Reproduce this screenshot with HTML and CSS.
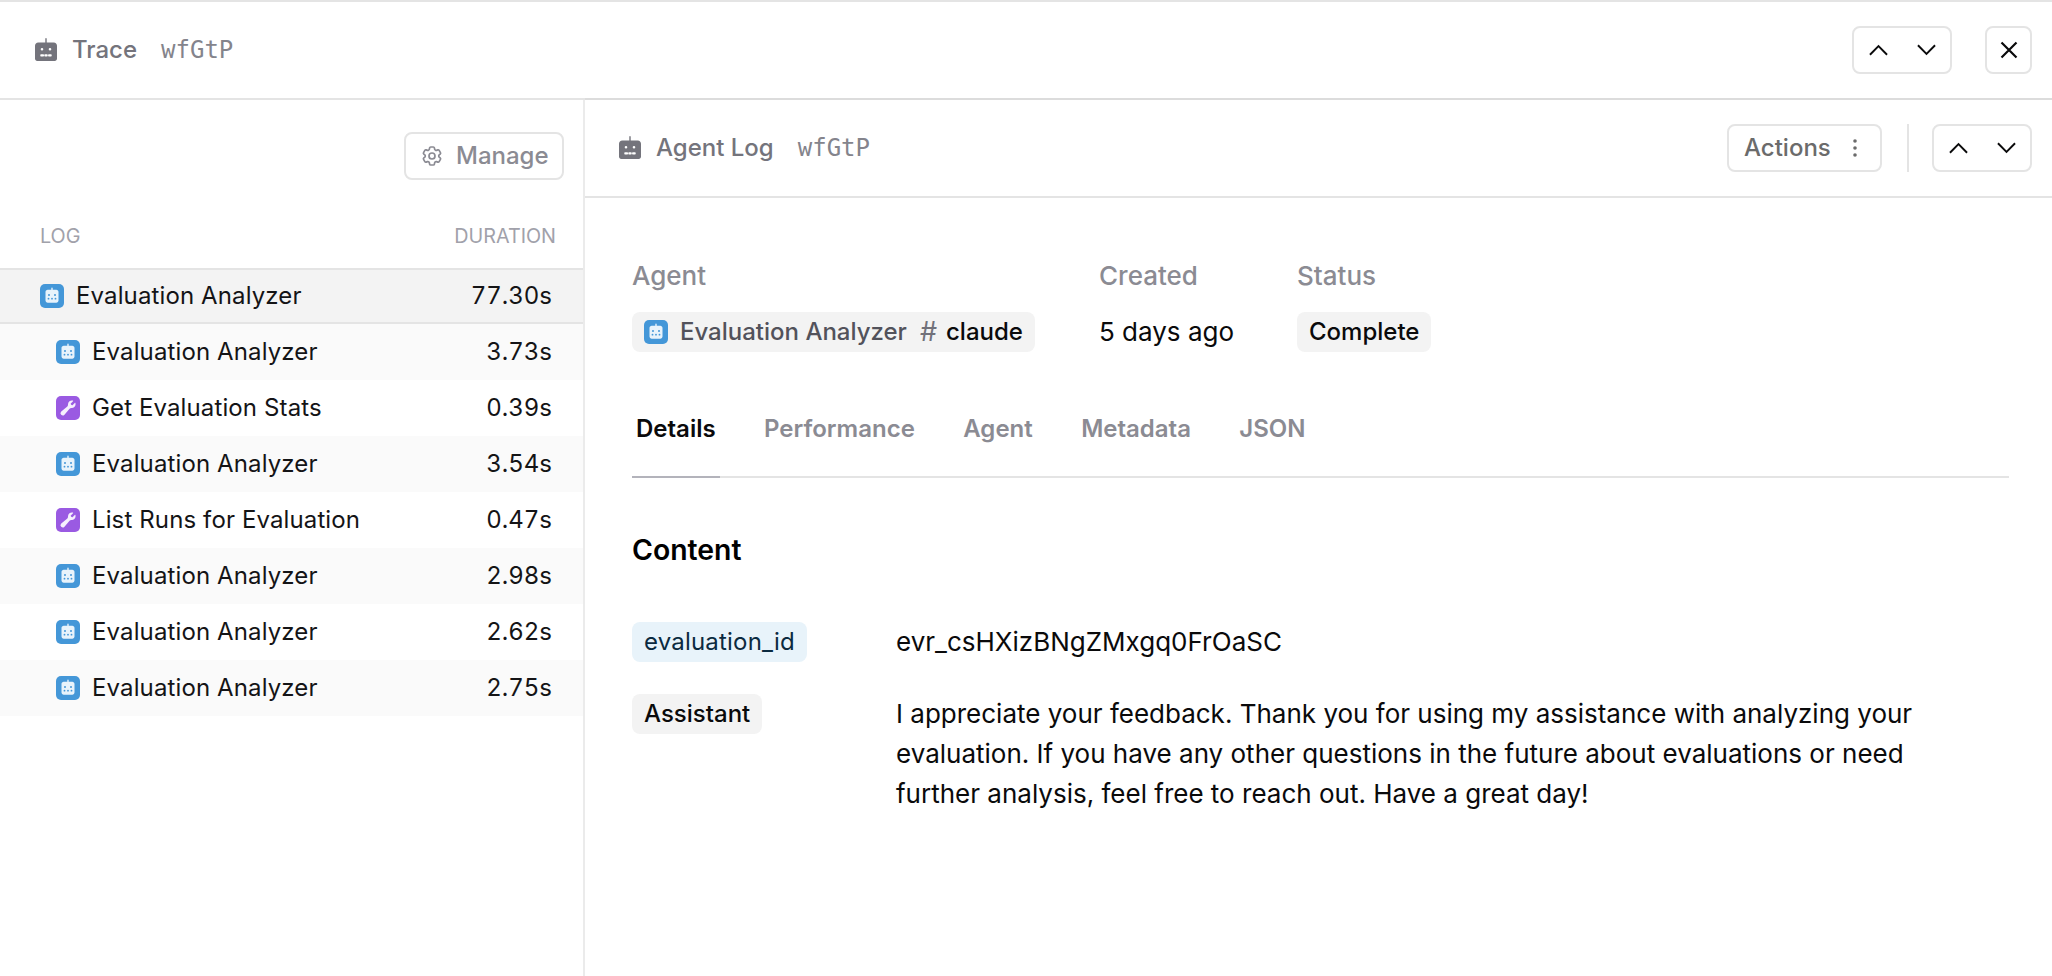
FILE: index.html
```html
<!DOCTYPE html>
<html lang="en">
<head>
<meta charset="utf-8">
<title>Trace wfGtP</title>
<link rel="stylesheet" href="styles.css">
</head>
<body>
<svg class="defs" width="0" height="0" aria-hidden="true">
  <symbol id="robot" viewBox="0 0 24 24">
    <path fill="currentColor" fill-rule="evenodd" d="M12 0c.4 0 .7.3.7.7v3.900h7.100c1.800 0 3.200 1.400 3.200 3.200v13c0 1.200-1 2.200-2.200 2.200H3.200C2 23 1 22 1 20.800v-13c0-1.800 1.400-3.200 3.200-3.200h7.100V.7c0-.4.3-.7.7-.7zM8 10a1.300 1.300 0 1 0 0 2.600A1.300 1.300 0 0 0 8 10zm8 0a1.300 1.300 0 1 0 0 2.600 1.300 1.300 0 0 0 0-2.600zM7 16.200h2.300c.5 0 .7.3.7.700v.9c0 .4-.2.700-.7.700H7c-.5 0-.7-.3-.7-.7v-.9c0-.4.2-.7.7-.7zm4 0h2c.5 0 .7.3.7.700v.9c0 .4-.2.700-.7.700h-2c-.5 0-.7-.3-.7-.7v-.9c0-.4.2-.7.700-.7zm3.800 0h2.200c.5 0 .7.3.7.700v.9c0 .4-.2.700-.7.700h-2.200c-.5 0-.7-.3-.7-.7v-.9c0-.4.2-.7.700-.7z"/>
  </symbol>
  <symbol id="robot-tile" viewBox="0 0 24 24">
    <rect width="24" height="24" rx="5" fill="#4497d8"/>
    <path fill="#e8f3fb" fill-rule="evenodd" d="M12 3.600c.4 0 .7.3.7.7v1.500h3.600c1.200 0 2.200 1 2.200 2.200v8.600c0 1.200-1 2.200-2.200 2.200H7.700c-1.200 0-2.200-1-2.200-2.200V8c0-1.200 1-2.200 2.200-2.200h3.600V4.300c0-.4.3-.7.7-.7zM9 10a1 1 0 1 0 0 2 1 1 0 0 0 0-2zm6 0a1 1 0 1 0 0 2 1 1 0 0 0 0-2zm-6.500 3.800a.9.9 0 1 0 0 1.800.9.9 0 0 0 0-1.800zm3.500 0a.9.9 0 1 0 0 1.800.9.9 0 0 0 0-1.800zm3.500 0a.9.9 0 1 0 0 1.800.9.9 0 0 0 0-1.800z"/>
  </symbol>
  <symbol id="wrench-tile" viewBox="0 0 24 24">
    <rect width="24" height="24" rx="5" fill="#9a5ae2"/>
    <g transform="translate(3.600 3.600) scale(.84)">
      <path fill="#f6effd" d="M19 5.500a4.500 4.500 0 01-4.791 4.490c-.873-.055-1.808.128-2.368.8l-6.024 7.230a2.724 2.724 0 11-3.850-3.850l7.230-6.024c.672-.56.855-1.495.8-2.368a4.500 4.500 0 015.873-4.575c.324.105.39.51.15.752L13.340 4.660a.455.455 0 00-.11.494 3.010 3.010 0 001.617 1.617c.17.07.363.02.493-.111l2.705-2.705c.241-.241.647-.174.752.15.14.435.204.9.204 1.395z"/>
    </g>
  </symbol>
  <symbol id="up" viewBox="0 0 20 12"><path d="M1 11 10 2l9 9" fill="none" stroke="currentColor" stroke-width="2"/></symbol>
  <symbol id="down" viewBox="0 0 20 12"><path d="M1 1l9 9 9-9" fill="none" stroke="currentColor" stroke-width="2"/></symbol>
</svg>

<header class="topbar">
  <div class="title">
    <svg class="ico-24"><use href="#robot"/></svg>
    <span class="title-name">Trace</span>
    <span class="mono">wfGtP</span>
  </div>
  <div class="top-actions">
    <div class="btn nav">
      <svg class="chev"><use href="#up"/></svg>
      <svg class="chev"><use href="#down"/></svg>
    </div>
    <button class="btn square" aria-label="Close">
      <svg class="x" viewBox="0 0 18 18"><path d="M1.500 1.500l15 15M16.500 1.500l-15 15" fill="none" stroke="currentColor" stroke-width="2.200"/></svg>
    </button>
  </div>
</header>

<main class="layout">
  <aside class="side">
    <div class="side-tools">
      <button class="btn manage">
        <svg class="gear" viewBox="0 0 24 24" fill="none" stroke="currentColor" stroke-width="1.700"><path d="M9.594 3.940c.09-.542.56-.94 1.110-.94h2.593c.55 0 1.020.398 1.110.94l.213 1.281c.063.374.313.686.645.87.074.04.147.083.22.127.325.196.72.257 1.075.124l1.217-.456a1.125 1.125 0 011.370.49l1.296 2.247a1.125 1.125 0 01-.26 1.431l-1.003.827c-.293.241-.438.613-.43.992a7.723 7.723 0 010 .255c-.008.378.137.75.43.991l1.004.827c.424.35.534.955.26 1.430l-1.298 2.247a1.125 1.125 0 01-1.369.491l-1.217-.456c-.355-.133-.75-.072-1.076.124a6.470 6.470 0 01-.22.128c-.331.183-.581.495-.644.869l-.213 1.281c-.09.543-.56.94-1.110.94h-2.594c-.55 0-1.019-.398-1.110-.94l-.213-1.281c-.062-.374-.312-.686-.644-.87a6.520 6.520 0 01-.22-.127c-.325-.196-.72-.257-1.076-.124l-1.217.456a1.125 1.125 0 01-1.369-.49l-1.297-2.247a1.125 1.125 0 01.26-1.431l1.004-.827c.292-.24.437-.613.43-.991a6.932 6.932 0 010-.255c.007-.38-.138-.751-.43-.992l-1.004-.827a1.125 1.125 0 01-.26-1.430l1.297-2.247a1.125 1.125 0 011.370-.491l1.216.456c.356.133.751.072 1.076-.124.072-.044.146-.086.22-.128.332-.183.582-.495.644-.869l.214-1.280z"/><circle cx="12" cy="12" r="3"/></svg>
        Manage
      </button>
    </div>
    <div class="log-head"><span>Log</span><span>Duration</span></div>
    <ul class="log">
      <li class="row root"><svg class="ico-24"><use href="#robot-tile"/></svg><span class="row-name">Evaluation Analyzer</span><span class="dur">77.30s</span></li>
      <li class="row"><svg class="ico-24"><use href="#robot-tile"/></svg><span class="row-name">Evaluation Analyzer</span><span class="dur">3.73s</span></li>
      <li class="row"><svg class="ico-24"><use href="#wrench-tile"/></svg><span class="row-name">Get Evaluation Stats</span><span class="dur">0.39s</span></li>
      <li class="row"><svg class="ico-24"><use href="#robot-tile"/></svg><span class="row-name">Evaluation Analyzer</span><span class="dur">3.54s</span></li>
      <li class="row"><svg class="ico-24"><use href="#wrench-tile"/></svg><span class="row-name">List Runs for Evaluation</span><span class="dur">0.47s</span></li>
      <li class="row"><svg class="ico-24"><use href="#robot-tile"/></svg><span class="row-name">Evaluation Analyzer</span><span class="dur">2.98s</span></li>
      <li class="row"><svg class="ico-24"><use href="#robot-tile"/></svg><span class="row-name">Evaluation Analyzer</span><span class="dur">2.62s</span></li>
      <li class="row"><svg class="ico-24"><use href="#robot-tile"/></svg><span class="row-name">Evaluation Analyzer</span><span class="dur">2.75s</span></li>
    </ul>
  </aside>

  <section class="detail">
    <div class="detail-bar">
      <div class="title">
        <svg class="ico-24"><use href="#robot"/></svg>
        <span class="title-name">Agent Log</span>
        <span class="mono">wfGtP</span>
      </div>
      <div class="detail-actions">
        <button class="btn actions">Actions
          <svg class="dots" viewBox="0 0 6 20"><circle cx="3" cy="3" r="1.800"/><circle cx="3" cy="10" r="1.800"/><circle cx="3" cy="17" r="1.800"/></svg>
        </button>
        <span class="divider"></span>
        <div class="btn nav">
          <svg class="chev"><use href="#up"/></svg>
          <svg class="chev"><use href="#down"/></svg>
        </div>
      </div>
    </div>

    <div class="detail-body">
      <div class="meta">
        <div class="meta-col meta-agent">
          <span class="meta-label">Agent</span>
          <span class="pill agent-pill"><svg class="ico-24"><use href="#robot-tile"/></svg><span class="agent-name">Evaluation Analyzer</span><span class="hash">#</span><span>claude</span></span>
        </div>
        <div class="meta-col meta-created">
          <span class="meta-label">Created</span>
          <span class="meta-value">5 days ago</span>
        </div>
        <div class="meta-col">
          <span class="meta-label">Status</span>
          <span class="pill">Complete</span>
        </div>
      </div>

      <nav class="tabs">
        <span class="tab active">Details</span>
        <span class="tab">Performance</span>
        <span class="tab">Agent</span>
        <span class="tab">Metadata</span>
        <span class="tab">JSON</span>
      </nav>

      <h2 class="content-title">Content</h2>

      <div class="kv">
        <div class="kv-key"><span class="pill pill-blue">evaluation_id</span></div>
        <div class="kv-val">evr_csHXizBNgZMxgq0FrOaSC</div>
        <div class="kv-key"><span class="pill">Assistant</span></div>
        <div class="kv-val">I appreciate your feedback. Thank you for using my assistance with analyzing your evaluation. If you have any other questions in the future about evaluations or need further analysis, feel free to reach out. Have a great day!</div>
      </div>
    </div>
  </section>
</main>
</body>
</html>
```
FILE: styles.css
```css
* { box-sizing: border-box; }
html, body { height: 100%; }
body {
  margin: 0;
  background: #fff;
  color: #0a0a0b;
  font-family: Inter, "Liberation Sans", sans-serif;
  font-size: 24px;
  line-height: 32px;
  overflow: hidden;
}
.defs { position: absolute; }
.ico-24 { width: 24px; height: 24px; flex: none; display: block; }

.topbar {
  height: 100px;
  border-top: 2px solid #e4e4e4;
  border-bottom: 2px solid #e4e4e4;
  display: flex;
  align-items: center;
  justify-content: space-between;
  padding: 0 20px 0 34px;
}
.title { display: flex; align-items: center; color: #74747c; font-weight: 500; }
.title-name { margin-left: 14px; }
.mono {
  margin-left: 24px;
  font-family: "DejaVu Sans Mono", monospace;
  font-size: 24px;
  font-weight: 400;
  color: #84848c;
}
.top-actions { display: flex; gap: 33px; }

.btn {
  height: 48px;
  display: flex;
  align-items: center;
  background: #fff;
  border: 2px solid #e4e4e4;
  border-radius: 8px;
  font: inherit;
  padding: 0;
}
.nav { width: 100px; justify-content: space-between; padding: 0 14.5px; color: #0a0a0b; }
.chev { width: 19px; height: 12px; display: block; }
.square { width: 47px; justify-content: center; color: #0a0a0b; }
.x { width: 18px; height: 18px; }

.layout { display: flex; height: calc(100% - 100px); }
.side { width: 585px; flex: none; border-right: 2px solid #ebebeb; }
.side-tools { display: flex; justify-content: flex-end; padding: 32px 19px 0 0; }
.manage { width: 160px; justify-content: flex-start; gap: 12px; padding-left: 14px; color: #8b8b93; font-weight: 500; }
.gear { width: 24px; height: 24px; }
.log-head {
  display: flex;
  justify-content: space-between;
  padding: 0 27px 0 40px;
  margin-top: 40px;
  height: 48px;
  text-transform: uppercase;
  font-size: 19.8px;
  line-height: 32px;
  color: #a1a1aa;
}
.log { list-style: none; margin: 0; padding: 0; }
.row {
  height: 56px;
  display: flex;
  align-items: center;
  padding: 0 31px 0 56px;
  color: #141416;
}
.row:nth-child(even) { background: #fafafa; }
.row.root {
  background: #f3f3f3;
  border-top: 2px solid #e4e4e4;
  border-bottom: 2px solid #e4e4e4;
  padding-left: 40px;
}
.row-name { margin-left: 12px; flex: 1; letter-spacing: .12px; }
.dur { font-variant-numeric: tabular-nums; }

.detail { flex: 1; min-width: 0; box-shadow: 0 -2px 0 #dcdcdc; }
.detail-bar {
  height: 98px;
  border-bottom: 2px solid #e4e4e4;
  display: flex;
  align-items: center;
  justify-content: space-between;
  padding: 0 20px 0 33px;
}
.detail-actions { display: flex; align-items: center; }
.actions { width: 155px; justify-content: flex-start; gap: 21px; padding-left: 15px; color: #6b6b6b; font-weight: 500; }
.dots { width: 6px; height: 20px; fill: #6b6b6b; }
.divider { width: 2px; height: 48px; background: #e4e4e4; margin: 0 23px 0 25px; }

.detail-body { padding: 62px 43px 0 47px; }
.meta { display: flex; }
.meta-col { display: flex; flex-direction: column; align-items: flex-start; gap: 20px; }
.meta-agent { width: 467px; }
.meta-created { width: 198px; }
.meta-label { color: #8b8b93; font-weight: 500; line-height: 32px; font-size: 26px; }
.meta-value { line-height: 40px; font-size: 26px; }
.pill {
  display: inline-flex;
  align-items: center;
  height: 40px;
  padding: 0 12px;
  border-radius: 8px;
  background: #f3f3f3;
  font-weight: 500;
}
.agent-name { margin-left: 12px; color: #52525b; }
.hash { margin: 0 9px 0 13px; color: #71717a; font-weight: 400; font-size: 27px; }
.pill-blue { background: #e8f3fa; color: #0b2a40; font-weight: 400; letter-spacing: .2px; }

.tabs {
  display: flex;
  gap: 48.4px;
  margin-top: 52px;
  padding-left: 4px;
  height: 74px;
  border-bottom: 2px solid #e4e4e4;
}
.tab { color: #8b8b93; font-weight: 600; height: 74px; line-height: 50px; }
.tab.active {
  color: #0a0a0b;
  position: relative;
}
.tab.active::after {
  content: "";
  position: absolute;
  left: -4px;
  right: -4px;
  bottom: 0;
  height: 2px;
  background: #b3b3bb;
}
.content-title { margin: 54px 0 0; font-size: 28.4px; line-height: 36px; font-weight: 600; color: #000; }

.kv {
  margin-top: 54px;
  display: grid;
  grid-template-columns: 264px 1064px;
  row-gap: 32px;
  align-items: start;
}
.kv-val { line-height: 40px; font-size: 26px; }
.kv-key { display: flex; }
```
